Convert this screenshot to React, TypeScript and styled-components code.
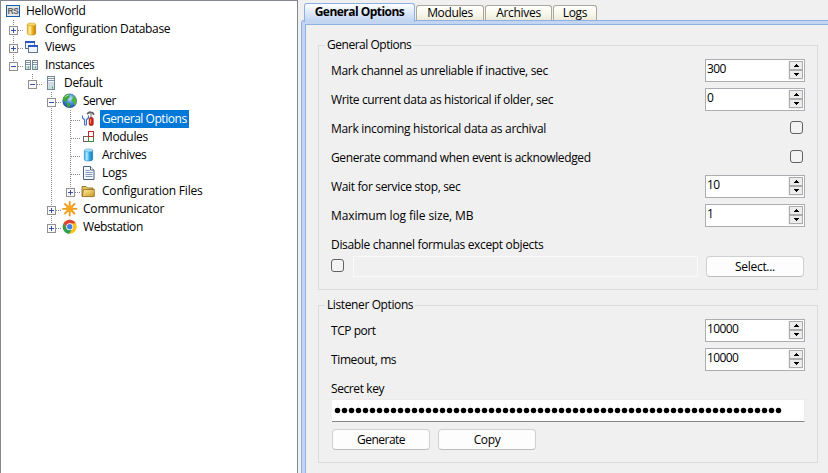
import React from "react";
import styled, { createGlobalStyle, css } from "styled-components";

const Global = createGlobalStyle`
  * { box-sizing: border-box; }
  html, body { margin: 0; padding: 0; overflow: hidden; }
  body, button, input { font-family: "Open Sans", "Noto Sans", sans-serif; font-size: 12px; color: #000; }
`;

const Window = styled.div`
  display: flex;
  width: 828px;
  height: 473px;
  overflow: hidden;
  background: #f0f0f0;
  line-height: 18px;
  white-space: nowrap;
`;

const Text = styled.span<{ $track?: number }>`
  letter-spacing: ${(p) => p.$track ?? -0.35}px;
`;

/* ---------- Tree ---------- */

const TreePanel = styled.nav`
  flex: none;
  width: 298px;
  padding: 1px 0 0 3px;
  border: 1px solid #828790;
  border-bottom: 0;
  background: #fff;
`;

const TreeRow = styled.div`
  display: flex;
  height: 18px;
`;

type Guide = "none" | "full" | "top";

const dotsDown = "repeating-linear-gradient(to bottom, #8a8a8a 0 1px, transparent 1px 2px)";
const dotsRight = "repeating-linear-gradient(to right, #8a8a8a 0 1px, transparent 1px 2px)";

const GuideCell = styled.span<{ $line: Guide; $branch?: boolean }>`
  flex: none;
  width: 19px;
  height: 18px;
  padding: 6px 0 0 5px;
  ${(p) => {
    const layers: string[] = [];
    if (p.$line !== "none") layers.push(`${dotsDown} 9px 0 / 1px ${p.$line === "full" ? 18 : 10}px no-repeat`);
    if (p.$branch) layers.push(`${dotsRight} 10px 10px / 9px 1px no-repeat`);
    return layers.length ? css`background: ${layers.join(", ")};` : "";
  }}
`;

const IconCell = styled.span`
  flex: none;
  width: 22px;
  padding: 1px 0 0 1px;
  svg { display: block; }
`;

const NodeLabel = styled.span<{ $selected?: boolean; $track?: number }>`
  height: 18px;
  margin-left: -2px;
  padding: 0 2px;
  line-height: 17px;
  letter-spacing: ${(p) => p.$track ?? -0.33}px;
  ${(p) => p.$selected && css`background: #0078d7; color: #fff;`}
`;

const Expander = ({ open }: { open?: boolean }) => (
  <svg width="9" height="9" viewBox="0 0 9 9" display="block" shapeRendering="crispEdges">
    <rect x="0.5" y="0.5" width="8" height="8" fill="#fafafa" stroke="#919191" />
    <path d={open ? "M2 4.5h5" : "M2 4.5h5M4.5 2v5"} stroke="#3a52a8" />
  </svg>
);

const Svg = ({ children }: { children: React.ReactNode }) => (
  <svg width="16" height="16" viewBox="0 0 16 16">{children}</svg>
);

const RsIcon = () => (
  <Svg>
    <rect x="1.5" y="2.5" width="13" height="11" fill="#e6e6e6" stroke="#1560a8" />
    <text x="8" y="11.2" textAnchor="middle" fontFamily="Liberation Sans, sans-serif" fontWeight="700" fontSize="8.5" letterSpacing="-0.3" fill="#606060">RS</text>
  </Svg>
);

const Cylinder = ({ id, light, mid, dark, top }: { id: string; light: string; mid: string; dark: string; top: string }) => (
  <Svg>
    <defs>
      <linearGradient id={id}>
        <stop offset="0" stopColor={mid} />
        <stop offset="0.3" stopColor={light} />
        <stop offset="0.6" stopColor={mid} />
        <stop offset="1" stopColor={dark} />
      </linearGradient>
    </defs>
    <path d="M3.3 3.4v9.1c0 2 8.4 2 8.4 0V3.400z" fill={`url(#${id})`} stroke={dark} strokeWidth="0.5" />
    <ellipse cx="7.5" cy="3.4" rx="4.2" ry="1.5" fill={top} stroke={dark} strokeWidth="0.4" />
  </Svg>
);

const ViewsIcon = () => (
  <Svg>
    <rect x="1.5" y="2.5" width="9" height="7" fill="#eef4fc" stroke="#5b7396" />
    <path d="M1 3h10" stroke="#2b57c0" strokeWidth="2" />
    <rect x="4.5" y="6.500" width="9" height="7" fill="#f1f6fd" stroke="#5b7396" />
    <path d="M4 7h10" stroke="#2b57c0" strokeWidth="2" />
  </Svg>
);

const Tower = ({ x, w, y, h }: { x: number; w: number; y: number; h: number }) => (
  <g>
    <rect x={x + 0.5} y={y + 0.5} width={w - 1} height={h - 1} fill="#cfdae5" stroke="#76869a" />
    <path d={`M${x + 1} ${y + 1.5}h${w - 2}M${x + 1} ${y + 3.5}h${w - 2}M${x + 1} ${y + 5.5}h${w - 2}`} stroke="#f6f9fc" />
    <path d={`M${x + 1} ${y + 2.5}h${w - 2}M${x + 1} ${y + 4.5}h${w - 2}`} stroke="#8496ab" />
    <path d={`M${x + w - 2.5} ${y + h - 3.500}v2`} stroke="#36b44a" />
  </g>
);

const InstancesIcon = () => (
  <Svg><Tower x={1} w={6} y={3} h={10} /><Tower x={8} w={6} y={3} h={10} /></Svg>
);
const ServerIcon = () => (
  <Svg><Tower x={4} w={8} y={1} h={14} /></Svg>
);

const GlobeIcon = () => (
  <Svg>
    <defs>
      <radialGradient id="globe" cx="0.55" cy="0.35" r="0.7">
        <stop offset="0" stopColor="#c4e2ff" />
        <stop offset="0.45" stopColor="#4a8ee0" />
        <stop offset="1" stopColor="#14418f" />
      </radialGradient>
    </defs>
    <circle cx="7.7" cy="7.8" r="7.3" fill="url(#globe)" />
    <path d="M1 5C2 2.500 5 .8 7.500 1l-.5 2 1 1-2 1.500-1.500 2.500L3 8.500 1 8z" fill="#3fa535" />
    <path d="M4 9l3 1 1.500 2L7 14.500 5.500 14 5 11.500z" fill="#3fa535" />
    <path d="M10 1.500l3 2 1.700 3.500-.7 4-1.500 1.500-1-3-2-1.500.5-2.500 1.500-.5z" fill="#4fb33c" />
    <path d="M3 4.500Q4.500 2.300 6.500 2" stroke="#c9efae" fill="none" />
  </Svg>
);

const ToolsIcon = () => (
  <Svg>
    <path d="M1.500 4.500v2.500l2 1.800v4.700q1 1.300 2 0V8.800l2-1.800V4.500" fill="#dce9fa" stroke="#4274c0" strokeWidth="1.100" />
    <path d="M2.600 4v2.500l1.900 1 1.900-1V4z" fill="#fff" />
    <path d="M6 3l2.500-1.700 3 .5 1.500 2" fill="none" stroke="#626262" strokeWidth="1.900" />
    <path d="M10 2.500V7" stroke="#a0a0a0" strokeWidth="1.600" />
    <rect x="8.200" y="6.500" width="4" height="8" rx="1.500" fill="#d3281c" stroke="#8d140d" strokeWidth="0.700" />
    <path d="M9.600 8v4.500" stroke="#ff8c78" />
  </Svg>
);

const ModulesIcon = () => (
  <Svg>
    <rect x="2.500" y="7.500" width="5" height="5" fill="#fff" stroke="#77605c" />
    <rect x="7.500" y="7.500" width="5" height="5" fill="#fff" stroke="#3e8b3e" />
    <rect x="7.500" y="2.500" width="5" height="5" fill="#fff" stroke="#c0282d" />
  </Svg>
);

const LogIcon = () => (
  <Svg>
    <path d="M2.500 1.500h7l3.500 3.500v9.500H2.500z" fill="#f3f7fd" stroke="#4d5f80" />
    <path d="M9.500 1.500V5H13" fill="#fff" stroke="#4d5f80" />
    <path d="M4.500 5.500h4M4.500 7.500h7M4.500 9.500h7M4.500 11.500h7" stroke="#8498bb" />
  </Svg>
);

const FolderIcon = () => (
  <Svg>
    <defs>
      <linearGradient id="folder" x2="1" y2="1">
        <stop offset="0" stopColor="#fff0a6" />
        <stop offset="1" stopColor="#cf981c" />
      </linearGradient>
    </defs>
    <path d="M1 13V3.500h4L6.500 5H12v8z" fill="#e8c65d" stroke="#8a6a22" strokeWidth="0.900" />
    <path d="M1.200 13.600L2.500 6.500H13.300V13.600z" fill="url(#folder)" stroke="#8a6a22" strokeWidth="0.800" />
  </Svg>
);

const StarIcon = () => (
  <Svg>
    <g stroke="#f09a1b" strokeWidth="1.800" strokeLinecap="round">
      <path d="M7.700 1v13.500M1 7.800h13.500M3 3l9.500 9.500M12.500 3L3 12.500" />
    </g>
    <circle cx="7.700" cy="7.800" r="3.500" fill="#f7a620" />
  </Svg>
);

const ChromeIcon = () => (
  <Svg>
    <circle cx="7.700" cy="7.800" r="7" fill="#fbc116" />
    <path d="M1.640 4.300A7 7 0 0 1 13.760 4.300L7.700 4.600 4.900 9.400z" fill="#dc4437" />
    <path d="M1.640 4.300A7 7 0 0 0 7.200 14.800L10.500 9.400 4.900 9.400z" fill="#2f9e55" />
    <circle cx="7.700" cy="7.800" r="3.500" fill="#fff" />
    <circle cx="7.700" cy="7.800" r="2.700" fill="#447ee8" />
  </Svg>
);

type NodeSpec = {
  label: string;
  icon: React.ReactNode;
  guides: Guide[];
  box?: "open" | "closed";
  selected?: boolean;
  track?: number;
};

const nodes: NodeSpec[] = [
  { label: "HelloWorld", icon: <RsIcon />, guides: [], track: -0.28 },
  { label: "Configuration Database", icon: <Cylinder id="gold" light="#fff3a8" mid="#f0b420" dark="#b87908" top="#f8d865" />, guides: ["full"], box: "closed" },
  { label: "Views", icon: <ViewsIcon />, guides: ["full"], box: "closed" },
  { label: "Instances", icon: <InstancesIcon />, guides: ["top"], box: "open", track: -0.4 },
  { label: "Default", icon: <ServerIcon />, guides: ["none", "top"], box: "open" },
  { label: "Server", icon: <GlobeIcon />, guides: ["none", "none", "full"], box: "open", track: -0.5 },
  { label: "General Options", icon: <ToolsIcon />, guides: ["none", "none", "full", "full"], selected: true, track: -0.46 },
  { label: "Modules", icon: <ModulesIcon />, guides: ["none", "none", "full", "full"] },
  { label: "Archives", icon: <Cylinder id="aqua" light="#b9ecff" mid="#35a9e0" dark="#1779b4" top="#9de0fa" />, guides: ["none", "none", "full", "full"] },
  { label: "Logs", icon: <LogIcon />, guides: ["none", "none", "full", "full"], track: -0.2 },
  { label: "Configuration Files", icon: <FolderIcon />, guides: ["none", "none", "full", "top"], box: "closed", track: -0.2 },
  { label: "Communicator", icon: <StarIcon />, guides: ["none", "none", "full"], box: "closed", track: -0.2 },
  { label: "Webstation", icon: <ChromeIcon />, guides: ["none", "none", "top"], box: "closed", track: -0.38 },
];

const Tree = () => (
  <TreePanel>
    {nodes.map((n) => (
      <TreeRow key={n.label}>
        {n.guides.map((g, i) => {
          const last = i === n.guides.length - 1;
          return (
            <GuideCell key={i} $line={g} $branch={last}>
              {last && n.box && <Expander open={n.box === "open"} />}
            </GuideCell>
          );
        })}
        <IconCell>{n.icon}</IconCell>
        <NodeLabel $selected={n.selected} $track={n.track}>{n.label}</NodeLabel>
      </TreeRow>
    ))}
  </TreePanel>
);

/* ---------- Tabs ---------- */

const Main = styled.main`
  flex: 1;
  min-width: 0;
  padding: 3px 0 0 3px;
  display: flex;
  flex-direction: column;
`;

const TabStrip = styled.div`
  display: flex;
  align-items: flex-end;
  gap: 1px;
  height: 17px;
  padding-left: 3px;
`;

const Tab = styled.div<{ $active?: boolean; $w: number }>`
  width: ${(p) => p.$w}px;
  height: 15px;
  line-height: 14px;
  text-align: center;
  border: 1px solid #aca899;
  border-bottom: 0;
  border-radius: 3px 3px 0 0;
  background: linear-gradient(#fff, #f7f6ea 60%, #ece9d8);
  ${(p) => p.$active && css`
    height: 19px;
    margin-bottom: -2px;
    line-height: 16px;
    border-color: #8fb0e3;
    background: linear-gradient(#fff, #dfe9f9 45%, #bfd2f0);
    font-weight: 700;
    z-index: 1;
  `}
`;

const Page = styled.section`
  flex: 1;
  margin-right: -6px;
  border: 1px solid #8fb0e3;
  border-bottom: 0;
  border-radius: 3px 0 0 0;
  padding: 3px 0 0 3px;
  background: #c3d5f1;
`;

const PageBody = styled.div`
  height: 100%;
  border: 1px solid #8fb0e3;
  border-width: 1px 0 0 1px;
  background: #f0f0f0;
  padding: 20px 0 0 12px;
`;

/* ---------- Form ---------- */

const Group = styled.div<{ $h: number }>`
  width: 500px;
  height: ${(p) => p.$h}px;
  margin-bottom: 15px;
  padding: 0 12px;
  border: 1px solid #dcdcdc;
`;

const Legend = styled.div`
  width: max-content;
  height: 18px;
  margin: -10px 0 2px -6px;
  padding: 0 2px;
  background: #f0f0f0;
`;

const Row = styled.div`
  display: flex;
  align-items: center;
  justify-content: space-between;
  height: 29px;
`;

const Caption = styled.div<{ $h: number }>`
  height: ${(p) => p.$h}px;
  padding-top: 6px;
`;

const SpinBox = styled.div`
  display: flex;
  justify-content: space-between;
  width: 100px;
  height: 23px;
  padding: 0 1px;
  border: 1px solid #abadb3;
  background: #fff;
  line-height: 17px;
`;

const SpinButtons = styled.div`
  display: flex;
  flex-direction: column;
  height: 19px;
  margin-top: 1px;
  padding-left: 1px;
  background: #f0f0f0;
`;

const SpinButton = styled.span`
  display: flex;
  align-items: center;
  justify-content: center;
  width: 14px;
  height: 9px;
  border: 1px solid #acacac;
  background: #ececec;
`;

const CheckBox = styled.span`
  width: 13px;
  height: 13px;
  margin: -2px 2px 0 0;
  border: 1px solid #626262;
  border-radius: 3px;
  background: #f3f3f3;
`;

const SelectRow = styled.div`
  display: flex;
  align-items: center;
  height: 21px;
`;

const PathField = styled.div`
  width: 345px;
  height: 21px;
  margin: 0 8px 0 7px;
  border: 1px solid #f9f9f9;
`;

const Button = styled.button<{ $track?: number }>`
  width: 98px;
  height: 21px;
  padding: 0;
  border: 1px solid #d0d0d0;
  border-bottom-color: #bcbcbc;
  border-radius: 4px;
  background: #fdfdfd;
  line-height: 18px;
  letter-spacing: ${(p) => p.$track ?? -0.35}px;
`;

const SecretField = styled.div`
  display: flex;
  align-items: center;
  width: 473px;
  height: 23px;
  margin-left: 1px;
  padding-left: 2px;
  border: 1px solid #ececec;
  border-width: 1px 1px 1px 0;
  border-bottom-color: #868686;
  background: #fff;
`;

const ButtonRow = styled.div`
  display: flex;
  gap: 8px;
  padding: 7px 0 0 1px;
`;

const Arrow = ({ down }: { down?: boolean }) => (
  <svg width="5" height="3" viewBox="0 0 5 3" shapeRendering="crispEdges">
    <path d={down ? "M0 0h5v1h-1v1h-1v1h-1v-1h-1v-1h-1z" : "M0 3h5v-1h-1v-1h-1v-1h-1v1h-1v1h-1z"} />
  </svg>
);

const Spin = ({ value }: { value: string }) => (
  <SpinBox>
    <Text $track={-0.6}>{value}</Text>
    <SpinButtons>
      <SpinButton><Arrow /></SpinButton>
      <SpinButton><Arrow down /></SpinButton>
    </SpinButtons>
  </SpinBox>
);

const KEY_LENGTH = 64;

const Dots = () => (
  <svg width="450" height="7" viewBox="0 0 450 7">
    {Array.from({ length: KEY_LENGTH }, (_, i) => (
      <circle key={i} cx={3.5 + i * 7} cy="3.5" r="2.75" />
    ))}
  </svg>
);

type Option = { label: string; value?: string; track?: number };

const generalOptions: Option[] = [
  { label: "Mark channel as unreliable if inactive, sec", value: "300", track: -0.34 },
  { label: "Write current data as historical if older, sec", value: "0", track: -0.37 },
  { label: "Mark incoming historical data as archival", track: -0.3 },
  { label: "Generate command when event is acknowledged", track: -0.36 },
  { label: "Wait for service stop, sec", value: "10" },
  { label: "Maximum log file size, MB", value: "1", track: -0.11 },
];

const listenerOptions: Option[] = [
  { label: "TCP port", value: "10000", track: -0.45 },
  { label: "Timeout, ms", value: "10000", track: -0.38 },
];

const OptionRows = ({ options }: { options: Option[] }) => (
  <>
    {options.map((o) => (
      <Row key={o.label}>
        <Text $track={o.track}>{o.label}</Text>
        {o.value !== undefined ? <Spin value={o.value} /> : <CheckBox />}
      </Row>
    ))}
  </>
);

export default function App() {
  return (
    <Window>
      <Global />
      <Tree />
      <Main>
        <TabStrip>
          <Tab $active $w={111}><Text $track={-0.53}>General Options</Text></Tab>
          <Tab $w={68}><Text>Modules</Text></Tab>
          <Tab $w={67}><Text $track={-0.3}>Archives</Text></Tab>
          <Tab $w={44}><Text $track={-0.3}>Logs</Text></Tab>
        </TabStrip>
        <Page>
          <PageBody>
            <Group $h={245}>
              <Legend><Text $track={-0.48}>General Options</Text></Legend>
              <OptionRows options={generalOptions} />
              <Caption $h={26}><Text $track={-0.33}>Disable channel formulas except objects</Text></Caption>
              <SelectRow>
                <CheckBox />
                <PathField />
                <Button $track={-0.3}>Select...</Button>
              </SelectRow>
            </Group>
            <Group $h={158}>
              <Legend><Text $track={-0.39}>Listener Options</Text></Legend>
              <OptionRows options={listenerOptions} />
              <Caption $h={25}><Text $track={-0.4}>Secret key</Text></Caption>
              <SecretField><Dots /></SecretField>
              <ButtonRow>
                <Button $track={-0.5}>Generate</Button>
                <Button>Copy</Button>
              </ButtonRow>
            </Group>
          </PageBody>
        </Page>
      </Main>
    </Window>
  );
}
